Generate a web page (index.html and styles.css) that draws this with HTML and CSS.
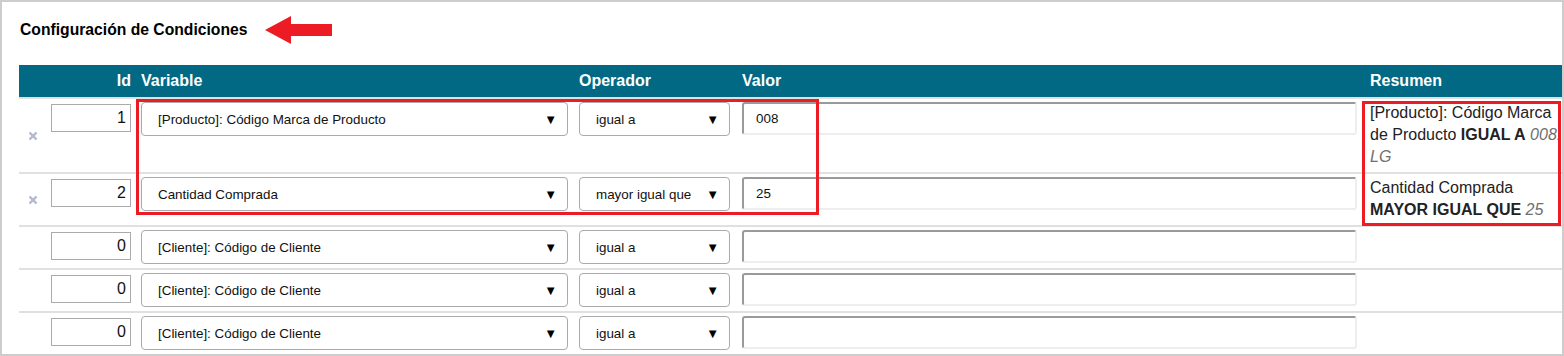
FILE: index.html
```html
<!DOCTYPE html>
<html lang="es">
  <head>
    <meta charset="UTF-8" />
    <title>Configuración de Condiciones</title>
    <link rel="stylesheet" href="styles.css">
  </head>
  <body>
    <div class="panel">
      <div class="panel-title">
        <h3>Configuración de Condiciones</h3>
        <svg class="arrow" width="68" height="30" viewBox="0 0 68 30">
          <polygon points="0,15 26,1 26,9 67,9 67,21 26,21 26,29" fill="#ed1c24" />
        </svg>
      </div>

      <table class="cond-table">
        <colgroup>
          <col style="width: 27px" />
          <col style="width: 90px" />
          <col style="width: 438px" />
          <col style="width: 163px" />
          <col style="width: 628px" />
          <col style="width: 208px" />
        </colgroup>
        <thead>
          <tr>
            <th></th>
            <th class="num">Id</th>
            <th>Variable</th>
            <th>Operador</th>
            <th>Valor</th>
            <th>Resumen</th>
          </tr>
        </thead>
        <tbody>
          <tr>
            <td class="del">
              <svg width="10" height="10" viewBox="0 0 10 10">
                <path d="M1.5 1.5L8.5 8.5M8.5 1.5L1.5 8.5" stroke="#b3b7cb" stroke-width="2.4" />
              </svg>
            </td>
            <td><input class="id-input" type="text" value="1" /></td>
            <td>
              <div class="select var-select">
                <span>[Producto]: Código Marca de Producto</span><span class="caret">▼</span>
              </div>
            </td>
            <td>
              <div class="select op-select"><span>igual a</span><span class="caret">▼</span></div>
            </td>
            <td><input class="val-input" type="text" value="008" /></td>
            <td class="summary">
              [Producto]: Código Marca de Producto <b>IGUAL A</b> <i>008: LG</i>
            </td>
          </tr>
          <tr>
            <td class="del">
              <svg width="10" height="10" viewBox="0 0 10 10">
                <path d="M1.5 1.5L8.5 8.5M8.5 1.5L1.5 8.5" stroke="#b3b7cb" stroke-width="2.4" />
              </svg>
            </td>
            <td><input class="id-input" type="text" value="2" /></td>
            <td>
              <div class="select var-select"><span>Cantidad Comprada</span><span class="caret">▼</span></div>
            </td>
            <td>
              <div class="select op-select"><span>mayor igual que</span><span class="caret">▼</span></div>
            </td>
            <td><input class="val-input" type="text" value="25" /></td>
            <td class="summary">
              Cantidad Comprada <b>MAYOR IGUAL QUE</b> <i>25</i>
            </td>
          </tr>
          <tr>
            <td class="del"></td>
            <td><input class="id-input" type="text" value="0" /></td>
            <td>
              <div class="select var-select"><span>[Cliente]: Código de Cliente</span><span class="caret">▼</span></div>
            </td>
            <td>
              <div class="select op-select"><span>igual a</span><span class="caret">▼</span></div>
            </td>
            <td><input class="val-input" type="text" value="" /></td>
            <td class="summary"></td>
          </tr>
          <tr>
            <td class="del"></td>
            <td><input class="id-input" type="text" value="0" /></td>
            <td>
              <div class="select var-select"><span>[Cliente]: Código de Cliente</span><span class="caret">▼</span></div>
            </td>
            <td>
              <div class="select op-select"><span>igual a</span><span class="caret">▼</span></div>
            </td>
            <td><input class="val-input" type="text" value="" /></td>
            <td class="summary"></td>
          </tr>
          <tr>
            <td class="del"></td>
            <td><input class="id-input" type="text" value="0" /></td>
            <td>
              <div class="select var-select"><span>[Cliente]: Código de Cliente</span><span class="caret">▼</span></div>
            </td>
            <td>
              <div class="select op-select"><span>igual a</span><span class="caret">▼</span></div>
            </td>
            <td><input class="val-input" type="text" value="" /></td>
            <td class="summary"></td>
          </tr>
        </tbody>
      </table>

      <!-- marcas de revisión -->
      <div class="mark mark-rules"></div>
      <div class="mark mark-summary"></div>
    </div>
  </body>
</html>
```

FILE: styles.css
```css
body {
  margin: 0;
  padding: 0;
  font-family: "Liberation Sans", Arial, sans-serif;
  background: #fff;
  color: #111;
}

.panel {
  position: relative;
  box-sizing: border-box;
  width: 1564px;
  height: 356px;
  border: 2px solid #cdcdcd;
  padding: 13px 0 0 17px;
  overflow: hidden;
}

.panel-title {
  display: flex;
  align-items: center;
  height: 30px;
}

.panel-title h3 {
  margin: 0 0 0 1px;
  font-size: 15.7px;
  font-weight: bold;
  color: #000;
}

.panel-title .arrow {
  margin-left: 18px;
}

.cond-table {
  margin-top: 20px;
  width: 1554px;
  table-layout: fixed;
  border-collapse: collapse;
}

.cond-table th {
  height: 32px;
  padding: 0 5px;
  background: #026984;
  color: #fff;
  font-size: 16px;
  font-weight: bold;
  text-align: left;
}

.cond-table th.num {
  text-align: right;
}

.cond-table td {
  padding: 3px 5px 4px;
  border-top: 2px solid #e0e0e0;
  vertical-align: top;
}

.cond-table td.del {
  padding: 0;
  text-align: center;
  vertical-align: middle;
}

.id-input {
  display: block;
  box-sizing: border-box;
  width: 80px;
  height: 28px;
  margin-top: 2px;
  padding: 0 4px;
  border: 1px solid #aaa;
  font-family: inherit;
  font-size: 16px;
  color: #111;
  text-align: right;
}

.select {
  display: flex;
  align-items: center;
  justify-content: space-between;
  box-sizing: border-box;
  height: 34px;
  padding: 0 10px 0 16px;
  border: 1px solid #aaa;
  border-radius: 4px;
  background: #fff;
  font-size: 13.4px;
  color: #111;
}

.var-select {
  width: 427px;
}

.op-select {
  width: 151px;
}

.select .caret {
  font-size: 13px;
  color: #000;
}

.val-input {
  display: block;
  box-sizing: border-box;
  width: 615px;
  height: 33px;
  padding: 0 12px;
  border: 2px solid #eee;
  border-top-color: #9a9a9a;
  border-left-color: #9a9a9a;
  border-radius: 3px;
  font-family: inherit;
  font-size: 13.4px;
  color: #111;
}

.summary {
  font-size: 16px;
  line-height: 22px;
  color: #222;
}

.summary i {
  color: #6f6f6f;
}

.mark {
  position: absolute;
  border: 3px solid #ed1c24;
  box-sizing: border-box;
}

.mark-rules {
  left: 134px;
  top: 97px;
  width: 683px;
  height: 116px;
}

.mark-summary {
  left: 1360px;
  top: 99px;
  width: 199px;
  height: 125px;
}
```
